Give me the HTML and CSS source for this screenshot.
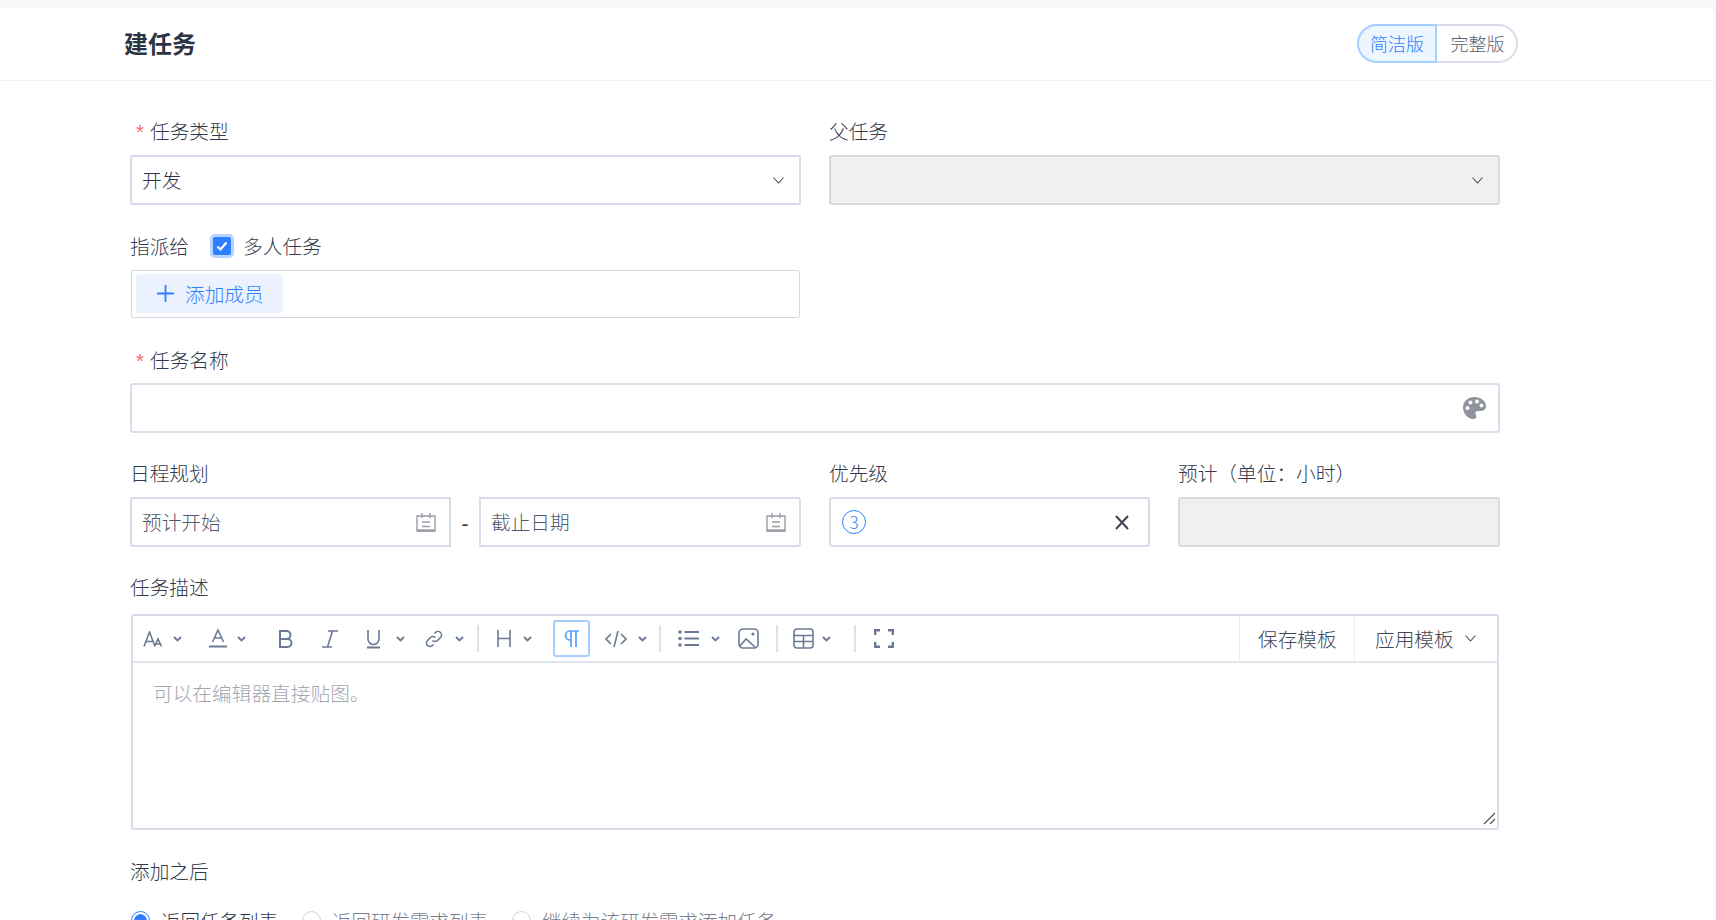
FILE: index.html
```html
<!DOCTYPE html>
<html lang="zh">
<head>
<meta charset="utf-8">
<title>建任务</title>
<link rel="stylesheet" href="styles.css">
</head>
<body>
<div class="page">
  <main class="card">
    <header class="head">
      <h1 class="title">建任务</h1>
      <div class="switch">
        <span class="seg seg-on">简洁版</span>
        <span class="seg seg-off">完整版</span>
      </div>
    </header>
    <form class="form">
      <div class="row two">
        <div class="field">
          <div class="label"><span class="req">*</span>任务类型</div>
          <div class="box select"><span class="value">开发</span>
            <svg class="chev" width="11" height="7" viewBox="0 0 11 7"><path d="M.5.5l5 5.5 5-5.5"/></svg>
          </div>
        </div>
        <div class="field">
          <div class="label">父任务</div>
          <div class="box select disabled">
            <svg class="chev" width="11" height="7" viewBox="0 0 11 7"><path d="M.5.5l5 5.5 5-5.5"/></svg>
          </div>
        </div>
      </div>

      <div class="row two assign">
        <div class="field">
          <div class="label label-check">指派给
            <span class="check"><svg width="18" height="18" viewBox="0 0 18 18"><path d="M4.5 9.5l3 3 6-7"/></svg></span>
            <span class="check-text">多人任务</span>
          </div>
          <div class="members">
            <button type="button" class="add">
              <svg width="17" height="17" viewBox="0 0 17 17"><path d="M8.5 0v17M0 8.5h17"/></svg>
              添加成员
            </button>
          </div>
        </div>
      </div>

      <div class="row name">
        <div class="field">
          <div class="label"><span class="req">*</span>任务名称</div>
          <div class="box text-input">
            <svg class="palette" width="23" height="22" viewBox="0 0 23 22">
              <path class="pal-body" d="M11.5 0C5 0 0 4.6 0 10.6 0 16.600 4.800 22 10.500 22c1.800 0 2.800-1.100 2.800-2.500 0-1.800-.9-2.300-.9-3.500 0-1.300 1-2.100 2.300-2.100h3.300c2.800 0 5-1.800 5-4.600C23 4 17.800 0 11.500 0z"/>
              <circle class="pal-dot" cx="4.500" cy="11" r="2"/>
              <circle class="pal-dot" cx="7.500" cy="5.500" r="2"/>
              <circle class="pal-dot" cx="14" cy="4.500" r="2"/>
              <circle class="pal-dot" cx="18.500" cy="8.500" r="2"/>
            </svg>
          </div>
        </div>
      </div>

      <div class="row three">
        <div class="field">
          <div class="label">日程规划</div>
          <div class="dates">
            <div class="box date date-a"><span class="ph">预计开始</span>
              <svg class="cal" width="20" height="20" viewBox="0 0 20 20"><path d="M1 4h18v15H1zM6 1v5M14 1v5M6 10h8M6 14.500h8"/><path class="cal-base" d="M1 18.500h18"/></svg>
            </div>
            <span class="dash">-</span>
            <div class="box date date-b"><span class="ph">截止日期</span>
              <svg class="cal" width="20" height="20" viewBox="0 0 20 20"><path d="M1 4h18v15H1zM6 1v5M14 1v5M6 10h8M6 14.500h8"/><path class="cal-base" d="M1 18.500h18"/></svg>
            </div>
          </div>
        </div>
        <div class="field">
          <div class="label">优先级</div>
          <div class="box priority"><span class="pri">3</span>
            <svg class="clear" width="16" height="15" viewBox="0 0 16 15"><path d="M2 1l12 13M14 1L2 14"/></svg>
          </div>
        </div>
        <div class="field">
          <div class="label">预计（单位：小时）</div>
          <div class="box disabled"></div>
        </div>
      </div>

      <div class="desc">
        <div class="label">任务描述</div>
        <div class="editor">
          <div class="toolbar">
            <div class="tools">
              <svg class="ic m10" width="19" height="16" viewBox="0 0 19 16"><path d="M1 15.500L6.500 1 12 15.500M3 10.500h7M11.500 15.500L15 8l3.500 7.500M12.800 13h4.400"/></svg>
              <svg class="car m11" width="9" height="6" viewBox="0 0 9 6"><path d="M1 1l3.500 3.500L8 1"/></svg>
              <svg class="ic m27" width="18" height="19" viewBox="0 0 18 19"><path d="M3.500 13L9 1l5.500 12M5.500 9h7"/><path class="thick" d="M0 17.500h18"/></svg>
              <svg class="car m10" width="9" height="6" viewBox="0 0 9 6"><path d="M1 1l3.500 3.500L8 1"/></svg>
              <svg class="ic m32" width="16" height="18" viewBox="0 0 16 18"><path class="thick" d="M2 1h6.500a4 4 0 0 1 0 8H2zM2 9h7.500a4 4 0 0 1 0 8H2z"/></svg>
              <svg class="ic m28" width="16" height="18" viewBox="0 0 16 18"><path d="M6 1h10M0 17h10M10.500 1L5.500 17"/></svg>
              <svg class="ic m29" width="13" height="20" viewBox="0 0 13 20"><path d="M1 1v9a5.500 5.500 0 0 0 11 0V1"/><path class="thick" d="M0 18.500h13"/></svg>
              <svg class="car m16" width="9" height="6" viewBox="0 0 9 6"><path d="M1 1l3.500 3.500L8 1"/></svg>
              <svg class="ic m20" width="18" height="18" viewBox="0 0 18 18"><path d="M7.500 10.500a3.500 3.500 0 0 0 5 0l3-3a3.500 3.500 0 0 0-5-5l-1 1M10.500 7.500a3.500 3.500 0 0 0-5 0l-3 3a3.500 3.500 0 0 0 5 5l1-1"/></svg>
              <svg class="car m12" width="9" height="6" viewBox="0 0 9 6"><path d="M1 1l3.500 3.500L8 1"/></svg>
              <span class="sep m13"></span>
              <svg class="ic m18" width="14" height="17" viewBox="0 0 14 17"><path d="M1 0v17M13 0v17M1 8.500h12"/></svg>
              <svg class="car m12" width="9" height="6" viewBox="0 0 9 6"><path d="M1 1l3.500 3.500L8 1"/></svg>
              <span class="para m21"><svg width="15" height="17" viewBox="0 0 15 17"><path d="M7 1v16M12 1v16M15 1H6a4.500 4.500 0 0 0 0 9h1"/></svg></span>
              <svg class="ic m15" width="22" height="18" viewBox="0 0 22 18"><path d="M6 4L1 9l5 5M16 4l5 5-5 5M13 1L9 17"/></svg>
              <svg class="car m11" width="9" height="6" viewBox="0 0 9 6"><path d="M1 1l3.500 3.500L8 1"/></svg>
              <span class="sep m12"></span>
              <svg class="ic m17" width="21" height="17" viewBox="0 0 21 17"><path class="thick" d="M6.500 2H21M6.500 8.500H21M6.500 15H21"/><circle class="solid" cx="2" cy="2" r="1.800"/><circle class="solid" cx="2" cy="8.500" r="1.800"/><circle class="solid" cx="2" cy="15" r="1.800"/></svg>
              <svg class="car m12" width="9" height="6" viewBox="0 0 9 6"><path d="M1 1l3.500 3.500L8 1"/></svg>
              <svg class="ic m18" width="21" height="21" viewBox="0 0 21 21"><rect class="thin" x="1" y="1" width="19" height="19" rx="4"/><path class="thin" d="M2 18l6-7 9 8"/><circle class="solid" cx="15" cy="6" r="1.600"/></svg>
              <span class="sep m17"></span>
              <svg class="ic m15" width="21" height="21" viewBox="0 0 21 21"><rect class="thin" x="1" y="1" width="19" height="19" rx="3"/><path class="thin" d="M1 7.500h19M1 13.500h19M10.500 7.500V20"/></svg>
              <svg class="car m8" width="9" height="6" viewBox="0 0 9 6"><path d="M1 1l3.500 3.500L8 1"/></svg>
              <span class="sep m23"></span>
              <svg class="ic m18" width="20" height="19" viewBox="0 0 20 19"><path class="heavy" d="M1.200 6V1.200H6M14 1.200h4.800V6M18.800 13v4.800H14M6 17.800H1.200V13"/></svg>
            </div>
            <div class="tpl tpl-save">保存模板</div>
            <div class="tpl tpl-apply">应用模板
              <svg class="chev" width="11" height="7" viewBox="0 0 11 7"><path d="M.5.5l5 5.5 5-5.500"/></svg>
            </div>
          </div>
          <div class="body">
            <div class="placeholder">可以在编辑器直接贴图。</div>
            <svg class="grip" width="13" height="13" viewBox="0 0 13 13"><path d="M1 12L12 1M7 12l5-5"/></svg>
          </div>
        </div>
      </div>

      <div class="after">
        <div class="label">添加之后</div>
        <div class="radios">
          <span class="radio on"></span><span class="rtext rtext-on">返回任务列表</span>
          <span class="radio"></span><span class="rtext">返回研发需求列表</span>
          <span class="radio"></span><span class="rtext">继续为该研发需求添加任务</span>
        </div>
      </div>
    </form>
  </main>
</div>
</body>
</html>
```
FILE: styles.css
```css
* { box-sizing: border-box; }
html, body { margin: 0; height: 100%; }
body {
  font-family: "Noto Sans CJK SC", "Noto Sans", sans-serif;
  font-size: 19.7px;
  font-weight: 300;
  color: #2f3646;
  background: #f6f7f9;
  overflow: hidden;
}
.page { height: 920px; padding: 8px 2px 0 0; overflow: hidden; }
.card { background: #fff; height: 100%; border-radius: 0 6px 0 0; overflow: hidden; }

.head {
  height: 73px;
  border-bottom: 1px solid #eff1f6;
  display: flex;
  align-items: center;
  justify-content: space-between;
  padding: 0 196px 0 124px;
}
.title { margin: -2px 0 0; font-size: 24px; line-height: 32px; font-weight: 700; color: #2c3444; }
.switch { display: flex; height: 39px; font-size: 18px; line-height: 34px; margin-top: -2px; }
.seg { text-align: center; border: 2px solid #d9dcea; }
.seg-on { width: 80px; background: #edf5ff; border-color: #a5cfff; color: #2e7fff; border-radius: 20px 0 0 20px; }
.seg-off { width: 81px; border-left: 0; color: #5a6172; border-radius: 0 20px 20px 0; padding-left: 2px; }

.form { padding: 35px 214px 0 130px; }
.row { display: grid; gap: 28px; margin-bottom: 25px; }
.two { grid-template-columns: 671px 671px; }
.three { grid-template-columns: 671px 321px 322px; }
.assign { margin-bottom: 27px; }

.label { height: 30px; line-height: 30px; margin-bottom: 9px; color: #333a4d; white-space: nowrap; }
.name .label { margin-bottom: 8px; }
.req {
  display: inline-block; width: 20px; padding-left: 6px;
  color: #f56c6c; font-family: "Liberation Sans", sans-serif; font-size: 20px;
}

.box {
  height: 50px;
  border: 2px solid #d9dcea;
  border-radius: 3px;
  background: #fff;
  display: flex;
  align-items: center;
  padding: 0 10px;
}
.select { justify-content: space-between; padding-right: 15px; }
.disabled { background: #f0f0f0; border-color: #dadada; justify-content: flex-end; }
.value { color: #2f3646; margin-top: -2px; }
.chev { fill: none; stroke: #444a57; stroke-width: 1.1; }

.label-check { height: 32px; line-height: 32px; margin-bottom: 8px; display: flex; align-items: center; }
.check {
  width: 18px; height: 18px; margin-left: 24px;
  background: #2e7fff; border-radius: 2px;
  box-shadow: 0 0 0 3px #b5d5ff;
  display: flex;
}
.check svg { fill: none; stroke: #fff; stroke-width: 2.2; }
.check-text { margin-left: 12px; }
.members {
  width: 669px;
  height: 48px;
  margin-left: 1px;
  border: 1px solid #d3d7e6;
  border-radius: 2px;
  padding: 3px 4px;
}
.add {
  width: 147px; height: 39px;
  border: 0; border-radius: 4px;
  background: #ebf2fd;
  color: #2e7fff;
  font: inherit;
  padding: 0 0 0 21px;
  display: flex; align-items: center; gap: 11px;
}
.add svg { stroke: #2e7fff; stroke-width: 1.8; flex: none; }

.text-input { justify-content: flex-end; padding-right: 12px; }
.pal-body { fill: #8f939c; }
.pal-dot { fill: #fff; }

.dates { display: flex; align-items: center; }
.date { justify-content: space-between; padding-right: 13px; }
.date-a { width: 321px; border-radius: 3px 0 0 3px; }
.date-b { width: 322px; border-radius: 0 3px 3px 0; }
.dash { width: 28px; text-align: center; font-weight: 500; }
.ph { color: #4f586d; margin-top: -2px; }
.cal { fill: none; stroke: #999da6; stroke-width: 1.4; }
.cal-base { stroke-width: 2.4; }

.priority { justify-content: space-between; padding: 0 18px 0 11px; }
.pri {
  width: 24px; height: 24px;
  border: 1.5px solid #2e7fff; border-radius: 50%;
  color: #2e7fff; font-size: 17px; line-height: 21px; text-align: center;
}
.clear { fill: none; stroke: #3c4353; stroke-width: 2; }

.desc .label { margin-bottom: 12px; }
.editor {
  width: 1368px; height: 216px;
  margin-left: 1px;
  border: 2px solid #d9dcea;
  border-radius: 3px;
}
.toolbar { height: 47px; border-bottom: 2px solid #e2e4ec; display: flex; }
.tools { flex: 1; display: flex; align-items: center; }
.ic { fill: none; stroke: #6b7a94; stroke-width: 1.6; flex: none; }
.ic .thick { stroke-width: 2; }
.ic .thin { stroke-width: 1.6; }
.ic .solid { fill: #6b7a94; stroke: none; }
.ic .heavy { stroke-width: 2.4; }
.car { fill: none; stroke: #6b7a94; stroke-width: 1.9; flex: none; }
.sep { width: 2px; height: 27px; background: #e0e2e6; flex: none; }
.para {
  width: 37px; height: 37px;
  border: 2px solid #a5cfff; border-radius: 3px;
  display: flex; align-items: center; justify-content: center; flex: none;
}
.para svg { fill: none; stroke: #5aa0ff; stroke-width: 1.7; }
.m8 { margin-left: 8px; } .m10 { margin-left: 10px; } .m11 { margin-left: 11px; }
.m12 { margin-left: 12px; } .m13 { margin-left: 13px; } .m15 { margin-left: 15px; }
.m16 { margin-left: 16px; } .m17 { margin-left: 17px; } .m18 { margin-left: 18px; }
.m20 { margin-left: 20px; } .m21 { margin-left: 21px; } .m23 { margin-left: 23px; }
.m27 { margin-left: 27px; } .m28 { margin-left: 28px; } .m29 { margin-left: 29px; }
.m32 { margin-left: 32px; }
.tpl {
  border-left: 1px solid #eceef2;
  display: flex; align-items: center;
  color: #3f4758; white-space: nowrap;
}
.tpl-save { width: 115px; padding-left: 18px; }
.tpl-apply { width: 143px; padding-left: 20px; gap: 11px; }
.body { height: 165px; padding: 15px 20px; display: flex; flex-direction: column; position: relative; }
.placeholder { color: #a2a6b0; line-height: 30px; }
.grip { fill: none; stroke: #555; stroke-width: 1.2; position: absolute; right: 1px; bottom: 3px; }

.after { margin-top: 26px; }
.after .label { margin-bottom: 19px; }
.radios { display: flex; align-items: center; height: 30px; margin-left: 1px; font-size: 19.5px; }
.radio { width: 19px; height: 19px; border: 1.5px solid #d3d3d3; border-radius: 50%; flex: none; }
.radio.on { border: 1.5px solid #2e7fff; background: radial-gradient(circle, #2e7fff 0 6px, #fff 6.5px); }
.rtext { margin: 0 24px 0 11px; color: #787e8c; }
.rtext-on { color: #2f3646; }
```
